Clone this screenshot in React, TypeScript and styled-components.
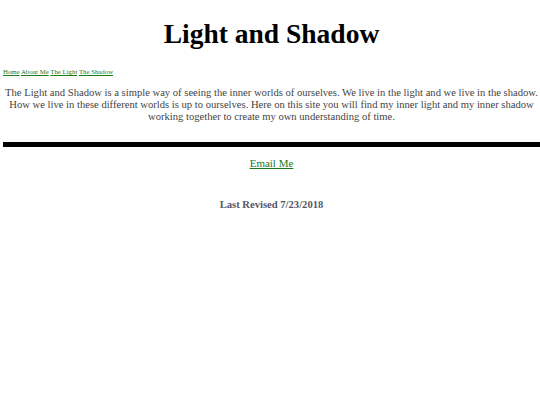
import React from 'react';
import styled, { createGlobalStyle } from 'styled-components';

const GlobalStyle = createGlobalStyle`
  body {
    margin: 0;
    background: #ffffff;
    font-family: "Liberation Serif", "Times New Roman", serif;
  }
`;

const Page = styled.div`
  padding: 0 0 0 3px;
  display: flex;
  flex-direction: column;
`;

const Title = styled.h1`
  margin: 18px 0 0;
  text-align: center;
  font-size: 27.5px;
  line-height: 32px;
  font-weight: bold;
  color: #000;
`;

const Nav = styled.nav`
  margin-top: 17px;
  font-size: 6.8px;
  line-height: 9px;
`;

const NavLink = styled.a`
  color: #1a7a1a;
  text-decoration: underline;
`;

const Intro = styled.p`
  margin: 11px 0 0;
  text-align: center;
  font-size: 10.6px;
  line-height: 12px;
  color: #444;
`;

const Rule = styled.div`
  margin-top: 19px;
  height: 5px;
  background: #000;
`;

const Email = styled.a`
  align-self: center;
  margin-top: 10px;
  font-size: 11px;
  color: #1a7a1a;
  text-decoration: underline;
`;

const Revised = styled.h3`
  margin: 30px 0 0;
  text-align: center;
  font-size: 10.6px;
  font-weight: bold;
  color: #555566;
`;

const links = ['Home', 'About Me', 'The Light', 'The Shadow'];

const App = () => {
  return (
    <>
      <GlobalStyle />
      <Page>
        <Title>Light and Shadow</Title>
        <Nav>
          {links.map((label, i) => (
            <React.Fragment key={label}>
              {i > 0 && ' '}
              <NavLink href="#">{label}</NavLink>
            </React.Fragment>
          ))}
        </Nav>
        <Intro>
          The Light and Shadow is a simple way of seeing the inner worlds of ourselves. We live in the light and we live in the
          shadow. How we live in these different worlds is up to ourselves. Here on this site you will find my inner light and
          my inner shadow working together to create my own understanding of time.
        </Intro>
        <Rule />
        <Email href="#">Email Me</Email>
        <Revised>Last Revised 7/23/2018</Revised>
      </Page>
    </>
  );
};

export default App;
